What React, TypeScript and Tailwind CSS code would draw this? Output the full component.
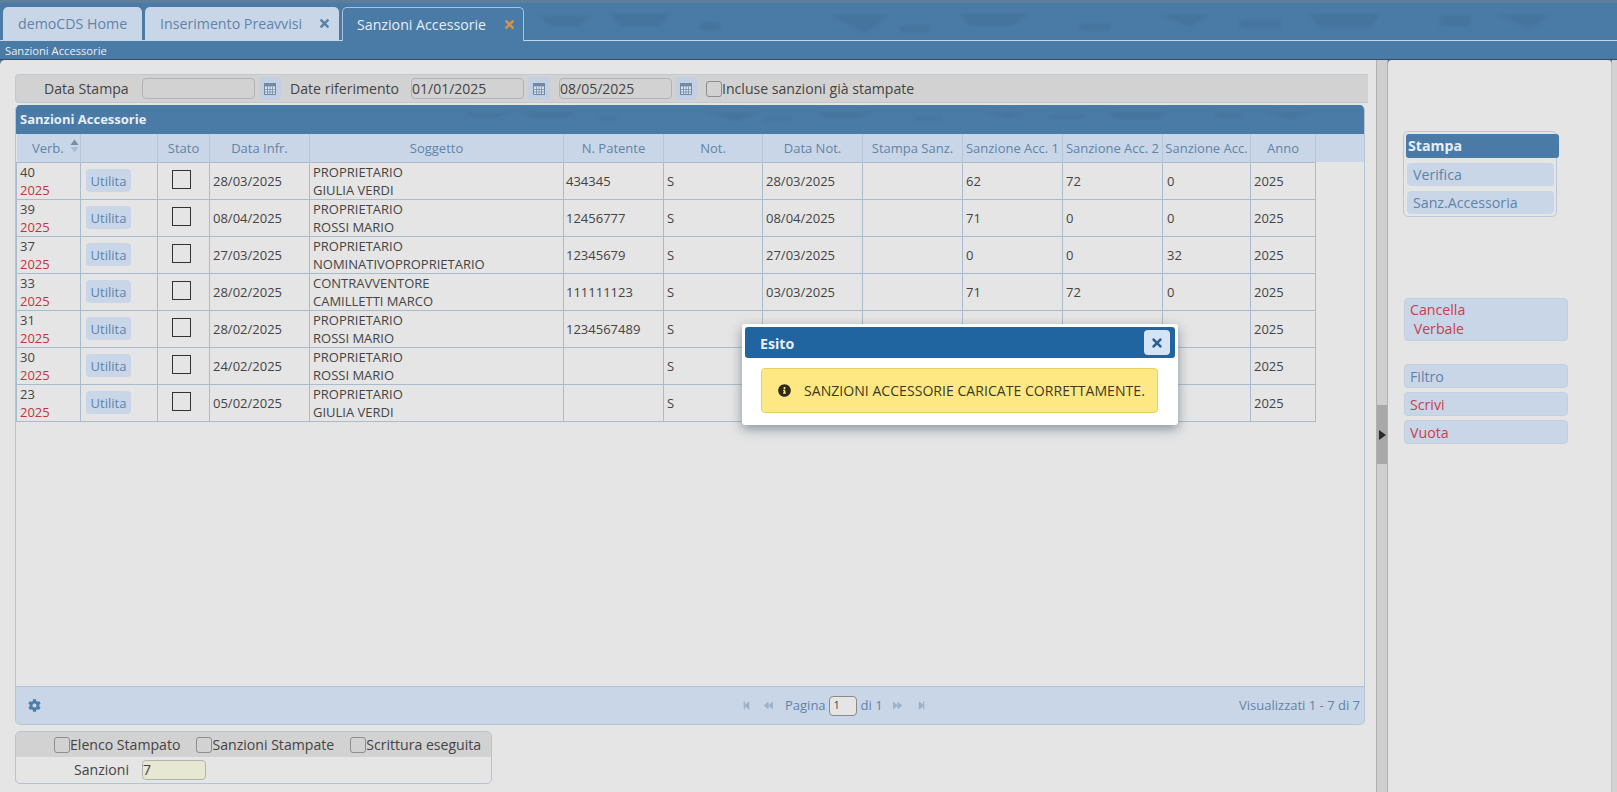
import React from 'react';
import { FaBackward, FaCog, FaForward, FaInfoCircle, FaStepBackward, FaStepForward, FaTimes } from 'react-icons/fa';

const rows = [
  ['40', '28/03/2025', 'PROPRIETARIO', 'GIULIA VERDI', '434345', '28/03/2025', '62', '72', '0'],
  ['39', '08/04/2025', 'PROPRIETARIO', 'ROSSI MARIO', '12456777', '08/04/2025', '71', '0', '0'],
  ['37', '27/03/2025', 'PROPRIETARIO', 'NOMINATIVOPROPRIETARIO', '12345679', '27/03/2025', '0', '0', '32'],
  ['33', '28/02/2025', 'CONTRAVVENTORE', 'CAMILLETTI MARCO', '111111123', '03/03/2025', '71', '72', '0'],
  ['31', '28/02/2025', 'PROPRIETARIO', 'ROSSI MARIO', '1234567489', '', '', '', ''],
  ['30', '24/02/2025', 'PROPRIETARIO', 'ROSSI MARIO', '', '', '', '', ''],
  ['23', '05/02/2025', 'PROPRIETARIO', 'GIULIA VERDI', '', '', '', '', ''],
];

const headers = [
  ['Data Infr.', 'w-[100px]'],
  ['Soggetto', 'w-[254px]'],
  ['N. Patente', 'w-[100px]'],
  ['Not.', 'w-[99px]'],
  ['Data Not.', 'w-[100px]'],
  ['Stampa Sanz.', 'w-[100px]'],
  ['Sanzione Acc. 1', 'w-[100px]'],
  ['Sanzione Acc. 2', 'w-[100px]'],
  ['Sanzione Acc.', 'w-[88px]'],
  ['Anno', 'w-[65px]'],
];

// mottled background of the blue bars
const Texture = ({ className = 'h-full' }: { className?: string }) => (
  <svg className={`absolute inset-x-0 top-0 w-full pointer-events-none blur-[1.5px] ${className}`} preserveAspectRatio="none" viewBox="0 0 1617 60">
    <g fill="#3f6b94" opacity="0.4">
      <path d="M540 16h50l-10 10h-30zM610 14h60l-10 12h-40zM830 15l60 0 -25 18zM960 14h70l-20 12h-40zM1160 15h50l-20 12zM1310 14h70l-10 14h-50zM1500 15l50 0 -20 14z" />
      <path d="M700 22h20v8h-20zM1080 24h30v6h-30zM1440 16h30v10h-30zM1240 20h40v8h-40zM900 26h30v6h-30z" />
    </g>
  </svg>
);

const CalendarButton = () => (
  <span className="flex h-[23px] w-[22px] shrink-0 items-center justify-center rounded-[4px] bg-[#c3d0e2]">
    <svg width="12" height="12" viewBox="0 0 12 12">
      <rect x="0.5" y="0.5" width="11" height="11" fill="#dde4ee" stroke="#6f8aa6" />
      <rect x="0.5" y="0.5" width="11" height="3" fill="#6f8aa6" />
      <path d="M0.5 6.5h11M0.5 9h11M3.5 4v7.5M6 4v7.5M8.5 4v7.5" stroke="#6f8aa6" strokeWidth="0.8" />
    </svg>
  </span>
);

const Check = ({ className = '' }: { className?: string }) => (
  <span className={`h-[16px] w-[16px] shrink-0 rounded-[3px] border border-[#8e8e8e] ${className}`} />
);

const SideButton = ({ children, red = false, tall = false }: { children: React.ReactNode; red?: boolean; tall?: boolean }) => (
  <div
    className={`w-[164px] rounded-[4px] border border-[#c3d0e0] bg-[#c9d6e8] pl-[5px] text-[14.2px] leading-[19px] ${
      red ? 'text-[#c8404c]' : 'text-[#5f84a8]'
    } ${tall ? 'h-[43px] pt-[1px]' : 'flex h-[24px] items-center'}`}
  >
    {children}
  </div>
);

const App: React.FC = () => {
  return (
    <div className="relative flex h-[792px] w-[1617px] flex-col overflow-hidden bg-[#4a7aa6] [font-family:'Open_Sans',sans-serif] text-[13px] text-[#444444]">
      <Texture className="h-[60px]" />
      <div className="relative h-[3px] bg-[#5d7f9c]" />

      {/* tabs */}
      <div className="relative flex h-[38px] items-end gap-[3px] border-b border-[#c9d6e8] pl-[3px] text-[14.2px]">
        <div className="flex h-[33px] w-[139px] items-center rounded-t-[5px] bg-[#c9d6e8] pl-[15px] text-[#5f84a8]">demoCDS Home</div>
        <div className="flex h-[33px] w-[194px] items-center rounded-t-[5px] bg-[#c9d6e8] pl-[15px] text-[#5f84a8]">
          <span>Inserimento Preavvisi</span>
          <FaTimes className="ml-auto mr-[8px] text-[13px] text-[#5a82a8]" />
        </div>
        <div className="-mb-px flex h-[34px] w-[182px] items-center rounded-t-[5px] border border-b-0 border-[#a9c3da] bg-[#4a7aa6] pl-[14px] text-[#e8eef5]">
          <span>Sanzioni Accessorie</span>
          <FaTimes className="ml-auto mr-[7px] text-[13px] text-[#d9924a]" />
        </div>
      </div>
      <div className="relative flex h-[18px] items-center pl-[5px] pt-[3px] text-[11.2px] text-[#e8eef5]">Sanzioni Accessorie</div>

      <div className="relative flex min-h-0 flex-1 border-t border-[#3c4c5c]">
        {/* left panel */}
        <div className="flex w-[1376px] shrink-0 flex-col rounded-tl-[5px] bg-[#e5e5e5] pl-[15px] pt-[14px]">
          <div className="flex h-[29px] w-[1353px] items-center rounded-l-[4px] border-y border-l border-[#bfc9d2] bg-[#d2d2d2] text-[14.1px]">
            <span className="ml-[28px] w-[98px]">Data Stampa</span>
            <span className="h-[21px] w-[113px] rounded-[4px] border border-[#b3b3b3]" />
            <span className="ml-[4px]"><CalendarButton /></span>
            <span className="ml-[9px] w-[121px]">Date riferimento</span>
            <span className="flex h-[21px] w-[113px] items-center rounded-[4px] border border-[#b3b3b3] text-[14px]">01/01/2025</span>
            <span className="ml-[4px]"><CalendarButton /></span>
            <span className="ml-[9px] flex h-[21px] w-[113px] items-center rounded-[4px] border border-[#b3b3b3] text-[14px]">08/05/2025</span>
            <span className="ml-[3px]"><CalendarButton /></span>
            <Check className="ml-[9px]" />
            <span>Incluse sanzioni già stampate</span>
          </div>

          {/* grid */}
          <div className="mt-[2px] flex h-[620px] w-[1350px] flex-col overflow-hidden rounded-[5px] border-x border-[#b5c4d4]">
            <div className="relative flex h-[29px] shrink-0 items-center overflow-hidden bg-[#4a7aa6] pl-[4px] pt-[1px] text-[13px] font-bold text-[#e8eef5]">
              <Texture />
              <span className="relative">Sanzioni Accessorie</span>
            </div>
            <div className="min-h-0 flex-1">
              <table className="table-fixed border-collapse text-[13px]">
                <thead>
                  <tr className="h-[28px] bg-[#c9d6e8] text-[#5f84a8]">
                    <th className="w-[64px] border-r border-[#b5c6d8] pl-[14px] pt-[1px] font-normal">
                      <span className="inline-flex items-center gap-[6px]">
                        Verb.
                        <svg width="9" height="14" viewBox="0 0 9 14" className="-mt-[4px]">
                          <path d="M4.5 0.5l4 5.5h-8z" fill="#6f8dae" />
                          <path d="M4.5 13.5l4-5.5h-8z" fill="#a9bdd2" />
                        </svg>
                      </span>
                    </th>
                    <th className="w-[77px] border-r border-[#b5c6d8] font-normal" />
                    <th className="w-[52px] border-r border-[#b5c6d8] pt-[1px] font-normal">Stato</th>
                    {headers.map(([h, w]) => (
                      <th key={h} className={`${w} overflow-hidden whitespace-nowrap border-r border-[#b5c6d8] pt-[1px] font-normal`}>{h}</th>
                    ))}
                    <th className="w-[48px] font-normal" />
                  </tr>
                </thead>
                <tbody>
                  {rows.map((r) => (
                    <tr key={r[0]} className="h-[37px] leading-[18px]">
                      <td className="border border-[#a9bccd] pl-[3px] align-middle">
                        <div>{r[0]}</div>
                        <div className="text-[#c8323c]">2025</div>
                      </td>
                      <td className="border border-[#a9bccd] pl-[5px]">
                        <span className="flex h-[23px] w-[45px] items-center justify-center rounded-[4px] bg-[#c9d6e8] text-[#5f84a8]">Utilita</span>
                      </td>
                      <td className="border border-[#a9bccd] pl-[14px]">
                        <span className="-mt-[3px] block h-[19px] w-[19px] border border-[#333333]" />
                      </td>
                      <td className="border border-[#a9bccd] pl-[3px]">{r[1]}</td>
                      <td className="border border-[#a9bccd] pl-[3px]">
                        <div>{r[2]}</div>
                        <div>{r[3]}</div>
                      </td>
                      <td className="border border-[#a9bccd] pl-[2px]">{r[4]}</td>
                      <td className="border border-[#a9bccd] pl-[3px]">S</td>
                      <td className="border border-[#a9bccd] pl-[3px]">{r[5]}</td>
                      <td className="border border-[#a9bccd] pl-[3px]" />
                      <td className="border border-[#a9bccd] pl-[3px]">{r[6]}</td>
                      <td className="border border-[#a9bccd] pl-[3px]">{r[7]}</td>
                      <td className="border border-[#a9bccd] pl-[4px]">{r[8]}</td>
                      <td className="border border-[#a9bccd] pl-[3px]">2025</td>
                    </tr>
                  ))}
                </tbody>
              </table>
            </div>
            {/* pager */}
            <div className="flex h-[39px] shrink-0 items-center rounded-b-[5px] border-y border-[#b5c4d4] bg-[#c9d6e8] text-[13px] text-[#5f84a8]">
              <FaCog className="ml-[12px] text-[13px] text-[#4f7ea8]" />
              <div className="ml-[701px] flex items-center text-[#5f84a8]">
                <FaStepBackward className="text-[9px] text-[#9db2c9]" />
                <FaBackward className="ml-[13px] text-[9px] text-[#9db2c9]" />
                <span className="ml-[12px]">Pagina</span>
                <span className="ml-[3px] flex h-[20px] w-[28px] items-center rounded-[4px] border border-[#8a8a8a] bg-[#e5e5e5] pl-[4px] text-[11px] text-[#444444]">1</span>
                <span className="ml-[4px]">di 1</span>
                <FaForward className="ml-[10px] text-[9px] text-[#9db2c9]" />
                <FaStepForward className="ml-[15px] text-[9px] text-[#9db2c9]" />
              </div>
              <span className="ml-auto mr-[4px]">Visualizzati 1 - 7 di 7</span>
            </div>
          </div>

          {/* bottom form */}
          <div className="mt-[6px] w-[477px] overflow-hidden rounded-[5px] border border-[#b5c4d4] text-[14.1px]">
            <div className="flex h-[25px] items-center bg-[#d2d2d2]">
              <Check className="ml-[38px]" />
              <span>Elenco Stampato</span>
              <Check className="ml-[16px]" />
              <span>Sanzioni Stampate</span>
              <Check className="ml-[16px]" />
              <span>Scrittura eseguita</span>
            </div>
            <div className="flex h-[26px] items-center">
              <span className="ml-[58px] w-[68px]">Sanzioni</span>
              <span className="flex h-[20px] w-[64px] items-center rounded-[4px] border border-[#b3b3b3] bg-[#e6e8d2]">7</span>
            </div>
          </div>
        </div>

        {/* splitter */}
        <div className="flex w-[12px] shrink-0 flex-col justify-start border-x border-[#b0b0b0] bg-[#cfcfcf] pt-[345px]">
          <div className="flex h-[59px] items-center justify-center bg-[#a8a8a8]">
            <svg width="7" height="10" viewBox="0 0 7 10"><path d="M0 0l7 5-7 5z" fill="#2b2b2b" /></svg>
          </div>
        </div>

        {/* right panel */}
        <div className="w-[224px] shrink-0 rounded-t-[4px] border-r border-[#bcc6cf] bg-[#e5e5e5] pl-[16px] pt-[71px] text-[14.2px]">
          <div className="-ml-[1px] h-[86px] w-[154px] rounded-[5px] border border-[#b9c8d6] pl-[2px] pt-[2px]">
            <div className="relative flex h-[24px] w-[153px] items-center overflow-hidden rounded-[3px] bg-[#4a7aa6] pl-[2px] font-bold text-[#e8eef5]">Stampa</div>
            <div className="ml-[1px] mt-[5px] flex h-[23px] w-[147px] items-center rounded-[4px] bg-[#c9d6e8] pl-[6px] text-[#5f84a8]">Verifica</div>
            <div className="ml-[1px] mt-[5px] flex h-[23px] w-[147px] items-center rounded-[4px] bg-[#c9d6e8] pl-[6px] text-[#5f84a8]">Sanz.Accessoria</div>
          </div>
          <div className="mt-[81px]">
            <SideButton red tall>Cancella<br />&nbsp;Verbale</SideButton>
          </div>
          <div className="mt-[23px] flex flex-col gap-[4px]">
            <SideButton>Filtro</SideButton>
            <SideButton red>Scrivi</SideButton>
            <SideButton red>Vuota</SideButton>
          </div>
        </div>
        <div className="flex-1 bg-[#d2d2d2]" />
      </div>

      {/* dialog */}
      <div className="absolute left-[742px] top-[324px] h-[101px] w-[436px] rounded-[3px] bg-white p-[3px] shadow-[0_4px_12px_rgba(60,80,100,0.55)]">
        <div className="relative flex h-[31px] items-center justify-between overflow-hidden rounded-[3px] bg-[#2065a0] pl-[15px] pr-[5px] text-[14.2px] font-bold text-[#e8eef5]">
          <span className="pt-[3px]">Esito</span>
          <span className="flex h-[25px] w-[26px] items-center justify-center rounded-[4px] bg-[#d5e3f5] text-[14px] text-[#2a5f92]"><FaTimes /></span>
        </div>
        <div className="ml-[16px] mt-[10px] flex h-[45px] w-[397px] items-center rounded-[4px] border border-[#e8d05f] bg-[#fde884] pl-[16px] text-[14.1px] text-[#3d3a20]">
          <FaInfoCircle className="text-[13px] text-[#2e2a16]" />
          <span className="ml-[13px]">SANZIONI ACCESSORIE CARICATE CORRETTAMENTE.</span>
        </div>
      </div>
    </div>
  );
};

export default App;
